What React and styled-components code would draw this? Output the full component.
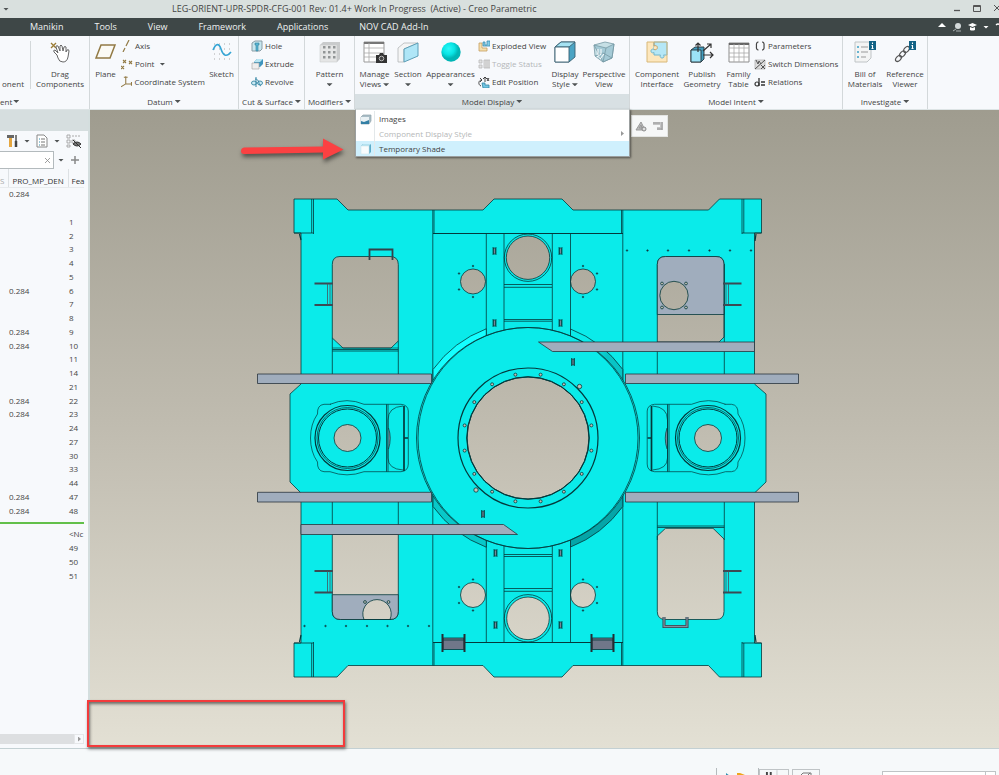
import React from "react";
import styled, { createGlobalStyle, css } from "styled-components";

const GlobalStyle = createGlobalStyle`
  * {
    box-sizing: border-box;
  }
  body {
    margin: 0;
    font: 8px/10px "Open Sans", "Noto Sans", sans-serif;
    color: #444;
  }
  button {
    font: inherit;
    color: inherit;
    background: none;
    border: none;
    padding: 0;
    margin: 0;
  }
`;

const CYAN = "#0aebea";
const PLATE = "#a0adbd";
const BLUE = "#2f8fb0";

/* ---------- icons ---------- */

const Icon = ({ w = 22, h = 22, children }) => (
  <svg width={w} height={h} viewBox={`0 0 ${w} ${h}`} fill="none" aria-hidden="true">
    {children}
  </svg>
);

const HandIcon = () => (
  <Icon>
    <path d="M2 2l5 5M7 2l-5 5" stroke="#9a7b35" strokeWidth="1.3" />
    <path
      d="M8 14L5 11q-1-2 1-2l3 3-2-6q0-2 2-1l2 5V5q1-2 2 0l1 5 1-4q1-1 2 0v5l1-2q2-1 2 1l-1 6q-1 5-5 5-4 0-5-4z"
      stroke="#666"
      strokeWidth="1"
      fill="#fff"
    />
  </Icon>
);

const PlaneIcon = () => (
  <Icon>
    <path d="M6 4h14l-5 13H1z" stroke="#927a45" strokeWidth="1.5" fill="#fbfaf5" />
  </Icon>
);

const AxisIcon = () => (
  <Icon w={12} h={12}>
    <path d="M8 0L5 6M4 8l-2 4" stroke="#927a45" strokeWidth="1.2" />
  </Icon>
);

const PointIcon = () => (
  <Icon w={12} h={12}>
    <path
      d="M2 2l3 3m0-3L2 5M8 3l3 3m0-3L8 6M0 8l3 3m0-3l-3 3"
      stroke="#927a45"
      strokeWidth="1.1"
    />
  </Icon>
);

const CsysIcon = () => (
  <Icon w={12} h={12}>
    <path d="M5 0v8h7M5 8l-5 3M3 1h4M11 6v4" stroke="#927a45" strokeWidth="1.1" />
  </Icon>
);

const SketchIcon = () => (
  <Icon>
    {[3, 8, 13, 18].map((y) => (
      <path key={y} d={`M3 ${y}h18`} stroke="#aaa" strokeDasharray="1 4" />
    ))}
    <path d="M2 9C5 2 8 2 10 8s5 9 10 3" stroke="#35a5d5" strokeWidth="1.6" />
  </Icon>
);

const HoleIcon = () => (
  <Icon w={12} h={12}>
    <path d="M1 3l3-2h7v8l-2 2H1z" fill="#c7e7ef" stroke="#8b9da5" />
    <path d="M4 3h4v2H7v6H5V5H4z" fill="#55b4d4" stroke="#367f99" strokeWidth=".6" />
  </Icon>
);

const ExtrudeIcon = () => (
  <Icon w={12} h={12}>
    <path d="M3 4l3-3h6v5l-3 3H3z" fill="#3e95bd" />
    <path d="M3 4l3-3h6L9 4z" fill="#b9e6f3" />
    <path d="M1 5h7v6H1z" fill="#eee" stroke="#aaa" strokeWidth=".7" />
  </Icon>
);

const RevolveIcon = () => (
  <Icon w={12} h={12}>
    <ellipse cx="3" cy="7" rx="2.5" ry="2" stroke="#4590aa" fill="#cceaf4" />
    <ellipse cx="9" cy="7" rx="2.5" ry="2" stroke="#4590aa" fill="#cceaf4" />
    <path d="M5 1v10M4 3c5 0 3 6 6 7" stroke="#3687a5" />
  </Icon>
);

const PatternIcon = () => (
  <Icon>
    <path d="M1 4l3-3h17v17l-3 3H1z" fill="#c9cbcc" />
    <path d="M1 4h17v17H1z" fill="#e5e6e6" stroke="#cbcccd" strokeWidth=".6" />
    {[6, 11, 16].map((y) =>
      [4, 9, 14].map((x) => <rect key={`${x}-${y}`} x={x} y={y - 1} width="2.5" height="2.5" fill="#929596" />)
    )}
  </Icon>
);

const ManageIcon = () => (
  <Icon w={24}>
    <path d="M1 1h20v20H1z" fill="#fff" stroke="#999" />
    <path d="M1 2h20" stroke="#777" strokeWidth="2" />
    <path d="M1 7h20M1 12h20M1 16h20M6 2v19" stroke="#aaa" strokeWidth=".8" />
    <path d="M13 14h3l1-2h3l1 2h3v8H13z" fill="#333" />
    <circle cx="18.500" cy="17.500" r="2.300" stroke="#bbb" fill="#444" />
  </Icon>
);

const SectionIcon = () => (
  <Icon>
    <path d="M1 7l6-5h14L7 8v13H1z" fill="#f5f5f5" stroke="#b3b6b8" strokeWidth=".8" />
    <path d="M7 8l14-6v13L7 21z" fill="#afe6f7" stroke="#5d9eb6" />
  </Icon>
);

const SphereIcon = () => (
  <Icon>
    <defs>
      <radialGradient id="sphere" cx=".38" cy=".33">
        <stop offset="0" stopColor="#2cf8f8" />
        <stop offset=".6" stopColor="#08e5e5" />
        <stop offset="1" stopColor="#00b5b5" />
      </radialGradient>
    </defs>
    <circle cx="11" cy="11" r="9.700" fill="url(#sphere)" />
  </Icon>
);

const ExplodedIcon = () => (
  <Icon w={12} h={12}>
    <path d="M1 3h3v5h5v3H1z" fill="#f5dfae" stroke="#c5a05f" strokeWidth=".8" />
    <path d="M5 2h2v3h2V1h3v5H5z" fill="#85cee8" stroke="#3a8eae" strokeWidth=".8" />
  </Icon>
);

const ToggleIcon = () => (
  <Icon w={12} h={12}>
    <path d="M1 2h3v3H1zM1 7h3v3H1zM6 2h6v8H6zM8 2v8M10 2v8" stroke="#b9b9b9" strokeWidth=".8" fill="#e3e3e3" />
  </Icon>
);

const EditPosIcon = () => (
  <Icon w={12} h={12}>
    <path d="M4 7h3v2h4v3H5z" fill="#72c5e2" stroke="#3387a5" strokeWidth=".8" />
    <path d="M3 10C0 9 0 4 4 4M2 2l2 2-2 2M7 1v5M5 3l2-2 2 2M9 2l2 3m0-3L9 5" stroke="#333" strokeWidth=".9" />
  </Icon>
);

const CubeIcon = () => (
  <Icon>
    <path d="M1 6l6-5h14v15l-6 5H1z" fill="#4ba4c4" stroke="#3a6172" strokeWidth=".9" />
    <path d="M1 6l6-5h14l-6 5z" fill="#a5e2f2" stroke="#3a6172" strokeWidth=".9" />
    <path d="M1 6h14v15H1z" fill="#fff" stroke="#3a6172" strokeWidth=".9" />
  </Icon>
);

const PerspectiveIcon = () => (
  <Icon>
    <path d="M1 4l11-3 9 2-2 14-9 4-8-6z" fill="#c6dfe5" stroke="#7699a5" strokeWidth=".8" />
    <path d="M1 4l12 3 8-4-2 14-9 4zM13 7l-3 14M2 15l8-3 9 5" stroke="#7699a5" strokeWidth=".8" fill="#8fbccb" fillOpacity=".6" />
    <path d="M5 8v6M8 8v5M4 16l4-3M7 18l4-5" stroke="#fff" />
  </Icon>
);

const PuzzleIcon = () => (
  <Icon>
    <path d="M1 1h20v20H1z" fill="#fde7bd" />
    <path
      d="M8 1H21V14H17.500C20 18 12.500 18 14.500 14H8V11.500C4 13.500 4 6.500 8 8.500Z"
      fill="#b5e7f6"
      stroke="#72b6ce"
    />
    <path d="M8 1V5C12.500 3 12.500 10 8 8.500" fill="#fde7bd" stroke="#c3a268" />
    <path d="M1 1h20v20H1z" stroke="#d8b878" />
  </Icon>
);

const PublishIcon = () => (
  <Icon w={24}>
    <path d="M1 9l4-3h9v12l-3 3H1z" fill="#439dbe" stroke="#26343b" strokeWidth=".9" />
    <path d="M1 9h10v12H1z" fill="#9be2f6" stroke="#26343b" strokeWidth=".9" />
    <path d="M8 11V2M5.500 4.500L8 2l2.500 2.500M13 10l8-7M17 3h4v4M13 14h10M20 11l3 3-3 3" stroke="#333" strokeWidth="1.200" />
  </Icon>
);

const TableIcon = () => (
  <Icon>
    <path d="M1 2h20v19H1z" fill="#fff" stroke="#8d8d8d" />
    <path d="M1 3h20" stroke="#666" strokeWidth="2" />
    <path d="M1 7h20M1 12h20M1 16h20M6 3v18M11 3v18M16 3v18" stroke="#aaa" strokeWidth=".8" />
  </Icon>
);

const ParensIcon = () => (
  <Icon w={12} h={12}>
    <path d="M4.500 2Q2 2 2.500 6Q2 10 4.500 10M8 2Q10.500 2 10 6Q10.500 10 8 10" stroke="#444" strokeWidth="1.200" />
  </Icon>
);

const SwitchIcon = () => (
  <Icon w={12} h={12}>
    <path d="M1 2h10v9H1z" fill="#ddd" stroke="#aaa" strokeWidth=".7" />
    <path d="M2 2l2 4 1-3 2 3M1 11L11 2M7 7l4 4M7 11l4-4" stroke="#444" strokeWidth=".9" />
  </Icon>
);

const RelationsIcon = () => (
  <Icon w={12} h={12}>
    <circle cx="3" cy="8" r="2" stroke="#333" strokeWidth="1.200" />
    <path d="M5 2v8M7 6h4M7 9h4" stroke="#333" strokeWidth="1.300" />
  </Icon>
);

const InfoTag = ({ x }) => (
  <g>
    <path d={`M${x} 0h7v9h-7z`} fill="#116184" />
    <path d={`M${x + 3.5} 1.500v1.500m0 1v4M${x + 2.5} 4.500h1m-1 3h2`} stroke="#fff" strokeWidth="1.100" />
  </g>
);

const BillIcon = () => (
  <Icon w={22}>
    <path d="M1 1h16v16l-4 4H1z" fill="#f3f4f4" stroke="#bfc4c6" />
    <path d="M3 6h2M3 11h2M3 16h2" stroke="#3b9ec5" strokeWidth="1.500" />
    <path d="M7 6h7M7 11h7M7 16h5" stroke="#999" />
    <InfoTag x={15} />
  </Icon>
);

const ChainIcon = () => (
  <Icon w={22}>
    <g stroke="#555" strokeWidth="1.200">
      <ellipse cx="4.500" cy="17.500" rx="3.500" ry="2.200" transform="rotate(-45 4.500 17.500)" />
      <ellipse cx="8.500" cy="13" rx="3.500" ry="2.200" transform="rotate(-45 8.500 13)" />
      <ellipse cx="12.500" cy="8.500" rx="3.500" ry="2.200" transform="rotate(-45 12.500 8.500)" />
    </g>
    <InfoTag x={15} />
  </Icon>
);

const ImagesIcon = () => (
  <Icon w={12} h={12}>
    <path d="M1 4l2-2h8v6l-2 3H1z" fill="#a9bdc6" stroke="#91a4ad" strokeWidth=".7" />
    <path d="M1 4h8v7H1z" fill="#e9f1f4" />
    <path d="M1 8l3 1 5-2v4H1z" fill="#347fa5" />
  </Icon>
);

const ShadeIcon = () => (
  <Icon w={12} h={12}>
    <path d="M1 3l2-2h8v8l-2 2H1z" fill="#5dacc9" />
    <path d="M1 3l2-2h8L9 3z" fill="#b4e2f0" />
    <path d="M1 3h8v8H1z" fill="#f8fcfd" stroke="#cfe5ed" strokeWidth=".6" />
  </Icon>
);

/* ---------- title and menu bars ---------- */

const Window = styled.div`
  height: 100vh;
  display: flex;
  flex-direction: column;
  overflow: hidden;
  background: #f7fafb;
`;

const TitleBar = styled.header`
  flex: none;
  height: 18px;
  display: flex;
  align-items: center;
  padding-left: 3px;
  background: #d9e0de;
  font-size: 9px;
`;

const Title = styled.div`
  margin-left: 163px;
  white-space: pre;
`;

const WindowButtons = styled.div`
  margin-left: auto;
  display: flex;
  gap: 12px;
  margin-right: -2px;
`;

const MenuBar = styled.nav`
  flex: none;
  height: 18px;
  display: flex;
  align-items: center;
  gap: 31px;
  padding-left: 30px;
  background: #3e4747;
  color: #eef1f1;
  font-size: 9px;
`;

const MenuTools = styled.div`
  margin-left: auto;
  display: flex;
  align-items: center;
  gap: 6px;
`;

const Caret = styled.span`
  display: inline-block;
  flex: none;
  width: 6px;
  height: 3px;
  margin-left: ${(p) => p.$gap || 0}px;
  vertical-align: middle;
  background: ${(p) => p.$color || "#4f5354"};
  clip-path: polygon(0 0, 100% 0, 50% 100%);
`;

/* ---------- ribbon ---------- */

const Ribbon = styled.section`
  flex: none;
  position: relative;
  z-index: 2;
  display: flex;
  height: 74px;
  background: #f7f9fc;
  border-bottom: 1px solid #dde4e5;
`;

const Group = styled.div`
  position: relative;
  flex: none;
  width: ${(p) => p.$width}px;
  display: flex;
  flex-direction: column;
  border-right: 1px solid #d3d8da;
`;

const GroupBody = styled.div`
  flex: 1;
  display: flex;
  padding: 1px 0 0 ${(p) => p.$pad || 0}px;
`;

const GroupLabel = styled.button`
  height: 15px;
  display: flex;
  align-items: center;
  justify-content: ${(p) => (p.$start ? "flex-start" : "center")};
  white-space: nowrap;
  ${(p) =>
    p.$open &&
    css`
      background: #d8e0e3;
    `}
`;

const BigButton = styled.button`
  width: ${(p) => p.$width}px;
  height: 56px;
  flex: none;
  display: flex;
  flex-direction: column;
  align-items: center;
  padding-top: 4px;
  white-space: nowrap;
  svg {
    flex: none;
    margin-bottom: 6px;
  }
`;

const SmallColumn = styled.div`
  display: flex;
  flex-direction: column;
  width: ${(p) => p.$width}px;
  padding-left: ${(p) => p.$pad || 0}px;
`;

const SmallButton = styled.button`
  height: 18px;
  display: flex;
  align-items: center;
  gap: 2px;
  white-space: nowrap;
  color: ${(p) => (p.disabled ? "#b4b7b9" : "inherit")};
`;

const CutOffButton = styled.button`
  width: 24px;
  height: 52px;
  display: flex;
  align-items: flex-end;
  justify-content: flex-end;
`;

const Divider = styled.i`
  width: 1px;
  height: 48px;
  margin: 4px 0 0 6px;
  background: #d3d8da;
`;

const Big = ({ icon, width, lines, caret }) => (
  <BigButton $width={width}>
    {icon}
    <span>{lines[0]}</span>
    <span>
      {lines[1]}
      {caret && <Caret $gap={lines[1] ? 2 : 0} />}
    </span>
  </BigButton>
);

const Small = ({ icon, children, ...rest }) => (
  <SmallButton {...rest}>
    {icon}
    {children}
  </SmallButton>
);

const DropMenu = styled.div`
  position: absolute;
  top: 100%;
  left: 0;
  right: -1px;
  padding-top: 1px;
  background: #fff;
  border: 1px solid #9b9f9f;
  border-top-color: #d8dedf;
  box-shadow: 1px 1px 2px rgba(0, 0, 0, 0.5);
`;

const DropItem = styled.button`
  width: 100%;
  height: 15px;
  display: flex;
  align-items: center;
  text-align: left;
  background: ${(p) => (p.$active ? "#cff0fd" : "#fff")};
  color: ${(p) => (p.disabled ? "#b5b7b8" : "inherit")};
  span:last-of-type {
    flex: 1;
  }
`;

const DropIcon = styled.i`
  width: 19px;
  height: 15px;
  margin-right: 4px;
  padding: 2px 0 0 4px;
  border-right: 1px solid #e3e8ea;
`;

const RightArrow = styled.i`
  display: block;
  width: 3px;
  height: 5px;
  margin-right: 5px;
  background: #999;
  clip-path: polygon(0 0, 100% 50%, 0 100%);
`;

/* ---------- model tree ---------- */

const Workspace = styled.main`
  flex: 1;
  min-height: 0;
  display: flex;
  position: relative;
`;

const TreePanel = styled.aside`
  flex: none;
  width: 90px;
  display: flex;
  flex-direction: column;
  background: #f7f9fc;
  border-right: 2px solid #d4dede;
  padding-right: 4px;
`;

const TreeHeader = styled.div`
  height: 21px;
  margin-right: -4px;
  background: #d6dedf;
`;

const TreeToolbar = styled.div`
  height: 20px;
  display: flex;
  align-items: center;
  gap: 6px;
  padding-left: 6px;
`;

const SearchRow = styled.div`
  height: 18px;
  display: flex;
  align-items: center;
`;

const SearchBox = styled.label`
  width: 54px;
  height: 18px;
  display: flex;
  align-items: center;
  background: #fff;
  border: 1px solid #b3babd;
  border-left: none;
  input {
    width: 44px;
    border: none;
    outline: none;
    background: none;
    font: inherit;
    padding: 0;
  }
`;

const TreeTable = styled.table`
  flex: none;
  width: 84px;
  table-layout: fixed;
  border-collapse: collapse;
  ${(p) =>
    p.$height &&
    css`
      height: ${p.$height}px;
    `}
  th {
    height: 18px;
    padding: 6px 0 0 4px;
    font-weight: 400;
    text-align: left;
    border-bottom: 1px solid #e8ebee;
    border-right: 1px solid #dde1e4;
    white-space: nowrap;
    color: #333;
  }
  th:first-child {
    padding-left: 0;
    color: #aaa;
  }
  th:last-child {
    padding-left: 3px;
    border-right: none;
  }
  td {
    height: 13px;
    padding: 0 0 0 1px;
    white-space: nowrap;
  }
`;

const InsertLine = styled.div`
  flex: none;
  height: 2px;
  margin: 4px 0;
  background: #62c04a;
`;

const ScrollBar = styled.div`
  height: 10px;
  margin: auto 0 4px;
  display: flex;
  background: #dddfe1;
  button {
    width: 10px;
    margin-left: auto;
    padding-left: 3px;
    background: #f7f9fc;
    border: 1px solid #e5e7e9;
  }
`;

const rows = [
  ["0.284", ""], ["", ""], ["", "1"], ["", "2"], ["", "3"], ["", "4"], ["", "5"],
  ["0.284", "6"], ["", "7"], ["", "8"], ["0.284", "9"], ["0.284", "10"], ["", "11"],
  ["", "14"], ["", "21"], ["0.284", "22"], ["0.284", "23"], ["", "24"], ["", "27"],
  ["", "30"], ["", "33"], ["", "44"], ["0.284", "47"], ["0.284", "48"],
];

const laterRows = ["<Nc", "49", "50", "51"];

const TreeCols = () => (
  <colgroup>
    <col style={{ width: 8 }} />
    <col style={{ width: 60 }} />
    <col />
  </colgroup>
);

/* ---------- graphics area ---------- */

const Canvas = styled.section`
  flex: 1;
  position: relative;
  padding: 86px 0 0 166px;
  overflow: hidden;
  background: linear-gradient(#9f9c8f, #c0bcb0 50%, #e3e0d4);
`;

const MiniToolbar = styled.div`
  position: absolute;
  top: 5px;
  left: 541px;
  width: 37px;
  height: 22px;
  display: flex;
  align-items: center;
  justify-content: space-around;
  background: #f6f7f7;
  border: 1px solid #e3e4e2;
`;

const PointerArrow = styled.svg`
  position: absolute;
  top: 22px;
  left: 238px;
  filter: drop-shadow(1px 3px 2px rgba(0, 0, 0, 0.5));
`;

const Callout = styled.div`
  position: absolute;
  left: 87px;
  bottom: 1px;
  width: 258px;
  height: 47px;
  border: 2px solid #f33b3c;
  box-shadow: 1px 2px 3px rgba(0, 0, 0, 0.5), inset 1px 2px 3px rgba(0, 0, 0, 0.5);
`;

const Slot = ({ x, y }) => (
  <g>
    <rect x={x - 1} y={y - 3} width="2" height="6" fill="#789" strokeWidth=".7" />
    <path d={`M${x - 1.500} ${y - 4}v8M${x + 1.500} ${y - 4}v8`} strokeWidth=".7" />
  </g>
);

const Dots = ({ points, r = 0.8 }) =>
  points.map(([x, y]) => <circle key={`${x},${y}`} cx={x} cy={y} r={r} fill="#234" strokeWidth=".5" />);

const circlePath = (x, y, r) => `M${x - r} ${y}a${r} ${r} 0 1 0 ${2 * r} 0a${r} ${r} 0 1 0 ${-2 * r} 0Z`;

const bodyPath = [
  "M294 199H337L348 210H483L494 199H562L573 210H708.500L719.500 199H761.500V233H754.500V384L766 394V482L754.500 493V643H761.500V677H719.500L708.500 665.500H573L562 677H494L483 665.500H348L337 677H294V643H301V493L290 482V394L301 384V233H294Z",
  "M340 256.500H390Q398.300 256.500 398.300 264.500V341L391 348H343L332.300 338V264.500Q332.300 256.500 340 256.500Z",
  "M665.500 256.500H716Q724 256.500 724 264.500V337L719 342H657.300V264.500Q657.300 256.500 665.500 256.500Z",
  "M332.300 534.500H398.300V611.500Q398.300 619.500 390 619.500H340.500Q332.300 619.500 332.300 611.500Z",
  "M665.500 528.300H713L724 539V611.500Q724 619.500 716 619.500H665.500Q657.300 619.500 657.300 611.500V536Z",
  circlePath(528, 257.7, 21.7),
  circlePath(528, 618.3, 21.3),
  circlePath(473, 281.5, 12.5),
  circlePath(583, 281.5, 12.5),
  circlePath(473, 595, 12.5),
  circlePath(583, 595, 12.5),
  circlePath(528, 438, 61),
  circlePath(347.5, 438, 13.5),
  circlePath(708, 438, 13.5),
].join("");

const Pivot = ({ flip }) => (
  <g transform={flip ? "translate(1055.500 0) scale(-1 1)" : undefined}>
    <path
      fill="none"
      strokeWidth=".7"
      d="M331 404.300H324Q317 405 317.500 414Q310.500 424 310.500 438T317.500 462Q317 471 324 471.700H330Q347 478 364 471.700H401Q408.300 471 408.300 464V411Q408 405 401 404.300H364Q347 397 330 404.300"
    />
    <circle cx="347.500" cy="438" r="32.500" fill="none" strokeWidth="1.200" />
    <circle cx="347.500" cy="438" r="30.500" fill="none" strokeWidth=".7" />
    <circle cx="347.500" cy="438" r="29" fill="none" strokeWidth="1" />
    <path d="M386.500 404.300V471.700M388 404.300V471.700" fill="none" />
    <path d="M403 406Q388 407 388 420V458Q388 469 403 470" fill="none" strokeWidth=".7" />
    <path d="M388.500 428Q392 438 388.500 449" fill="#789" strokeWidth=".7" />
    <path d="M404 406V471M404 438H408" strokeWidth="1.700" />
  </g>
);

const Handle = ({ y, flip }) => (
  <g transform={flip ? "translate(1056 0) scale(-1 1)" : undefined}>
    <path d={`M314.500 ${y}H333M314.500 ${y + 21.500}H333`} stroke="#3b4a54" strokeWidth="2" />
    <path d={`M327.500 ${y}v21M330 ${y}v21`} stroke="#46535c" />
  </g>
);

const Bracket = ({ x }) => (
  <g>
    <rect x={x + 1} y="638" width="21" height="11.500" fill="#707789" />
    <path d={`M${x + 1} 640h21`} />
    <path d={`M${x + 0.500} 634v18M${x + 22.500} 634v18`} stroke="#252c33" strokeWidth="2" />
  </g>
);

const bolts = Array.from({ length: 16 }, (_, i) => {
  const a = ((i + 0.5) * Math.PI) / 8;
  return [528 + 64.6 * Math.cos(a), 438 + 64.6 * Math.sin(a)];
});

const Drawing = () => (
  <svg width="544" height="484" viewBox="256 196 544 484" stroke="#04383b" strokeWidth=".8" role="img" aria-label="Leg orient upper spider">
    <path d={bodyPath} fill={CYAN} fillRule="evenodd" />

    {/* plates seen behind the upper right and lower left windows */}
    <path
      d={`M665.500 256.500H716Q724 256.500 724 264.500V314.500H657.300V264.500Q657.300 256.500 665.500 256.500Z${circlePath(674, 295.5, 14.2)}`}
      fill={PLATE}
      fillRule="evenodd"
    />
    <path
      d="M332.300 594.700H398.300V611.500Q398.300 619.500 390 619.500A14.200 14.200 0 1 0 364 619.500H340.500Q332.300 619.500 332.300 611.500Z"
      fill={PLATE}
    />
    <path d="M363.500 619.500H391" />

    {/* frame seams */}
    <g fill="none">
      <path d="M432.800 210V665.500M434 210V233M434 642V665.500M622.800 210V665.500M621.500 210V233M621.500 642V665.500" />
      <path d="M433 233.500H623M433 642.500H623" strokeWidth="1.200" />
      <path d="M294 233H313.500M311.700 199V233M313.500 199V234M294 643H313.500M311.700 643V677M313.500 642V677" />
      <path d="M742 199V234M743.800 199V233M742 233H761.500M742 642V677M743.800 643V677M742 643H761.500" />
      <path d="M299.500 234L301 240M756 234L755 241M299.500 642L301 635M756 642L755 635" strokeWidth="1.200" />
      <path d="M332.300 338V374M398.300 341V374M332.300 349.500H398.300M332.300 351H398.300" />
      <path d="M332.300 348H398.300" strokeWidth=".6" />
      <path d="M657.300 342V374M724.300 264V374M332.300 502V535M398.300 502V535" />
      <path d="M657.300 502V540M724.300 502V540M657.300 526H724.300M657.300 527.500H724.300" />
      <path d="M486.300 233V336M504 233V331M552.300 233V331M570.500 233V336" />
      <path d="M486.300 541V642M504 546V642M552.300 546V642M570.500 541V642" />
      <path d="M504 284.500H552M504 287.300H552M504 319.500H552M504 321.200H552" />
      <path d="M504 554.500H552M504 556.500H552M504 588.500H552M504 591.300H552" />
      <circle cx="528" cy="257.700" r="23.700" />
      <circle cx="528" cy="618.300" r="23.700" />
    </g>

    {/* hub ring */}
    <defs>
      <linearGradient id="rimRight" x2="1" y2="1">
        <stop offset=".4" stopColor={CYAN} />
        <stop offset=".6" stopColor="#08c4c6" />
      </linearGradient>
    </defs>
    <path d="M433 369.500A117 117 0 0 1 486.300 328.800V336L433 382Z" fill="#14ffff" />
    <path d="M570.500 329A117 117 0 0 1 622.800 369.500V382L570.500 336Z" fill="url(#rimRight)" />
    <path d="M433 506.500A117 117 0 0 0 486.300 547.200V540L433 494Z" fill="#08c8c9" />
    <path d="M570.500 547A117 117 0 0 0 622.800 506.500V494L570.500 540Z" fill="#05a5a8" />
    <path d={`M416.500 438a111.500 110.500 0 1 0 223 0a111.500 110.500 0 1 0 -223 0Z${circlePath(528, 438, 61)}`} fill={CYAN} fillRule="evenodd" />
    <ellipse cx="528" cy="438" rx="110" ry="110.500" fill="none" />
    <circle cx="528" cy="438" r="70" fill="none" strokeWidth="1.200" />
    <circle cx="528" cy="438" r="61.300" fill="none" strokeWidth="1" />
    {bolts.map(([x, y]) => (
      <circle key={x + y} cx={x} cy={y} r="1.500" fill="#c3bfb3" />
    ))}
    <circle cx="579.500" cy="386.500" r="2.200" fill="#c3bfb3" />
    <circle cx="476" cy="490" r="2.200" fill="#c8c5b9" />

    <Pivot />
    <Pivot flip />

    {/* flat plates */}
    <g fill={PLATE} stroke="#28343c">
      <path d="M257.500 374H431.500V383.500H257.500ZM625.500 374H798.500V383.500H625.500ZM257.500 492.300H431.500V502H257.500ZM625.500 492.300H798.500V502H625.500Z" />
      <path d="M538.500 342H754.500V351.500H552.500Z" />
      <path d="M301 524.500H503.500L517.500 534.500H301Z" />
    </g>

    <Handle y={283.5} />
    <Handle y={283.5} flip />
    <Handle y={571} />
    <Handle y={571} flip />
    <path d="M369.500 260V249.500H392.500V260" fill="none" stroke="#33414a" strokeWidth="1.800" />
    <path d="M664 617V626.500H687V617" fill="none" stroke="#33414a" strokeWidth="3" />
    <path d="M664 617V626.500H687V617" fill="none" stroke="#8191a0" strokeWidth="1.300" />
    <Bracket x={442} />
    <Bracket x={591} />

    {[[494.5, 251], [494.5, 323], [560.5, 251], [560.5, 323], [573, 362], [483, 514], [495.5, 553], [495.5, 625], [560.5, 553], [560.5, 625]].map(
      ([x, y]) => (
        <Slot key={`${x}-${y}`} x={x} y={y} />
      )
    )}
    <Dots points={[627, 647.5, 668, 689, 709.5, 730, 751].map((x) => [x, 250.5])} />
    <Dots points={[304.5, 325.5, 346, 367, 387.5, 408, 429].map((x) => [x, 626])} />
    {[281.5, 595].map((y) => (
      <Dots
        key={y}
        points={[[473, y - 15.5], [473, y + 15.5], [459, y - 8], [459, y + 8], [583, y - 15.5], [583, y + 15.5], [597, y - 8], [597, y + 8]]}
      />
    ))}
    {[[662, 283.5], [686, 283.5], [662, 307.5], [686, 307.5], [365, 602], [388.5, 602]].map(([x, y]) => (
      <circle key={`${x}-${y}`} cx={x} cy={y} r="1.400" fill="#c3bfb3" />
    ))}
  </svg>
);

/* ---------- status bar ---------- */

const StatusBar = styled.footer`
  flex: none;
  height: 27px;
  display: flex;
  padding-top: 19px;
  overflow: hidden;
  background: #f6f9fa;
  border-top: 1px solid #c3d0d3;
`;

const StatusTools = styled.div`
  width: 283px;
  flex: none;
  margin-left: auto;
  display: flex;
  border-left: 1px solid #b5bbbd;
`;

const StatusButton = styled.button`
  width: ${(p) => p.$width}px;
  height: 18px;
  flex: none;
  display: flex;
  align-items: flex-start;
  margin: 1px 3px 0 0;
  padding-left: 5px;
  border: 1px solid #bfc4c6;
`;

const FilterSelect = styled.select`
  width: 114px;
  height: 20px;
  margin: 3px 3px 0 auto;
  appearance: none;
  border: 1px solid #bfc4c6;
  background: #fff linear-gradient(#bfc4c6, #bfc4c6) no-repeat 102px 0 / 1px 100%;
`;

const App = () => {
  return (
    <Window>
      <GlobalStyle />
      <TitleBar>
        <Caret />
        <Title>LEG-ORIENT-UPR-SPDR-CFG-001 Rev: 01.4+ Work In Progress  (Active) - Creo Parametric</Title>
        <WindowButtons>
          <button aria-label="Minimize">
            <Icon w={8} h={8}><path d="M1 6.500h6" stroke="#555" strokeWidth="1.300" /></Icon>
          </button>
          <button aria-label="Maximize">
            <Icon w={8} h={8}><path d="M.5 1.500h7v6h-7zM.5 2.500h7" stroke="#555" /></Icon>
          </button>
          <button aria-label="Close">
            <Icon w={8} h={8}><path d="M1 1l6 6M7 1L1 7" stroke="#555" /></Icon>
          </button>
        </WindowButtons>
      </TitleBar>

      <MenuBar>
        <button>Manikin</button>
        <button>Tools</button>
        <button>View</button>
        <button>Framework</button>
        <button>Applications</button>
        <button>NOV CAD Add-In</button>
        <MenuTools>
          <Icon w={8} h={10}><path d="M0 5l4-4 4 4z" fill="#fff" /></Icon>
          <Icon w={10} h={10}>
            <circle cx="6" cy="4" r="3" fill="#d3d9da" />
            <path d="M4 7L1 9M4 9h5" stroke="#aab1b2" />
          </Icon>
          <Icon w={9} h={10}>
            <path d="M0 3l4.500-2L9 3 4.500 5zM2 5v3q2 1 5 0V5L4.500 6z" fill="#fff" />
          </Icon>
          <Caret $color="#fff" />
          <Icon w={4} h={10}><path d="M1 3q2-2 4 0" stroke="#fff" strokeWidth="1.300" /></Icon>
        </MenuTools>
      </MenuBar>

      <Ribbon>
        <Group $width={90}>
          <GroupBody>
            <CutOffButton>onent</CutOffButton>
            <Divider />
            <Big icon={<HandIcon />} width={58} lines={["Drag", "Components"]} />
          </GroupBody>
          <GroupLabel $start>ent<Caret $gap={1} /></GroupLabel>
        </Group>

        <Group $width={149}>
          <GroupBody>
            <Big icon={<PlaneIcon />} width={31} lines={["Plane"]} />
            <SmallColumn $width={84}>
              <Small icon={<AxisIcon />}>Axis</Small>
              <Small icon={<PointIcon />}>Point<Caret $gap={3} /></Small>
              <Small icon={<CsysIcon />}>Coordinate System</Small>
            </SmallColumn>
            <Big icon={<SketchIcon />} width={33} lines={["Sketch"]} />
          </GroupBody>
          <GroupLabel>Datum<Caret $gap={2} /></GroupLabel>
        </Group>

        <Group $width={66}>
          <GroupBody $pad={12}>
            <SmallColumn $width={50}>
              <Small icon={<HoleIcon />}>Hole</Small>
              <Small icon={<ExtrudeIcon />}>Extrude</Small>
              <Small icon={<RevolveIcon />}>Revolve</Small>
            </SmallColumn>
          </GroupBody>
          <GroupLabel>Cut &amp; Surface<Caret $gap={2} /></GroupLabel>
        </Group>

        <Group $width={50}>
          <GroupBody>
            <Big icon={<PatternIcon />} width={49} lines={["Pattern"]} caret />
          </GroupBody>
          <GroupLabel>Modifiers<Caret $gap={2} /></GroupLabel>
        </Group>

        <Group $width={275}>
          <GroupBody $pad={4}>
            <Big icon={<ManageIcon />} width={31} lines={["Manage", "Views"]} caret />
            <Big icon={<SectionIcon />} width={36} lines={["Section"]} caret />
            <Big icon={<SphereIcon />} width={49} lines={["Appearances"]} caret />
            <SmallColumn $width={74} $pad={3}>
              <Small icon={<ExplodedIcon />}>Exploded View</Small>
              <Small icon={<ToggleIcon />} disabled>Toggle Status</Small>
              <Small icon={<EditPosIcon />}>Edit Position</Small>
            </SmallColumn>
            <Big icon={<CubeIcon />} width={32} lines={["Display", "Style"]} caret />
            <Big icon={<PerspectiveIcon />} width={46} lines={["Perspective", "View"]} />
          </GroupBody>
          <GroupLabel $open>Model Display<Caret $gap={2} /></GroupLabel>
          <DropMenu role="menu">
            <DropItem role="menuitem">
              <DropIcon><ImagesIcon /></DropIcon>
              <span>Images</span>
            </DropItem>
            <DropItem role="menuitem" disabled>
              <DropIcon />
              <span>Component Display Style</span>
              <RightArrow />
            </DropItem>
            <DropItem role="menuitem" $active>
              <DropIcon><ShadeIcon /></DropIcon>
              <span>Temporary Shade</span>
            </DropItem>
          </DropMenu>
        </Group>

        <Group $width={213}>
          <GroupBody $pad={3}>
            <Big icon={<PuzzleIcon />} width={48} lines={["Component", "Interface"]} />
            <Big icon={<PublishIcon />} width={42} lines={["Publish", "Geometry"]} />
            <Big icon={<TableIcon />} width={31} lines={["Family", "Table"]} />
            <SmallColumn $width={86}>
              <Small icon={<ParensIcon />}>Parameters</Small>
              <Small icon={<SwitchIcon />}>Switch Dimensions</Small>
              <Small icon={<RelationsIcon />}>Relations</Small>
            </SmallColumn>
          </GroupBody>
          <GroupLabel>Model Intent<Caret $gap={2} /></GroupLabel>
        </Group>

        <Group $width={85}>
          <GroupBody $pad={2}>
            <Big icon={<BillIcon />} width={40} lines={["Bill of", "Materials"]} />
            <Big icon={<ChainIcon />} width={40} lines={["Reference", "Viewer"]} />
          </GroupBody>
          <GroupLabel>Investigate<Caret $gap={2} /></GroupLabel>
        </Group>
      </Ribbon>

      <Workspace>
        <TreePanel>
          <TreeHeader />
          <TreeToolbar>
            <Icon w={12} h={14}>
              <path d="M1 1h7v3H1z" fill="#666" />
              <path d="M3 4h3v9H3z" fill="#e5a640" />
              <path d="M10 1v6" stroke="#555" strokeWidth="1.500" />
              <path d="M10 7v6" stroke="#444" strokeWidth="2.500" />
            </Icon>
            <Caret />
            <Icon w={12} h={14}>
              <path d="M1 1h7l3 3v9H1z" fill="#fff" stroke="#888" />
              <path d="M5 5h4M5 8h4M5 11h4" stroke="#777" />
              <path d="M3 5h1M3 8h1M3 11h1" stroke={BLUE} />
            </Icon>
            <Caret />
            <Icon w={16} h={14}>
              <path d="M1 1h3v3H1zM1 6h3v3H1zM1 11h3v2H1zM6 6h3v3H6z" stroke="#999" strokeWidth=".8" />
              <path d="M6 2h8" stroke="#aaa" strokeDasharray="2 1" />
              <path d="M7 10q4-4 8 0-4 4-8 0zM7 6l8 8" stroke="#333" fill="#777" />
            </Icon>
          </TreeToolbar>
          <SearchRow>
            <SearchBox>
              <input aria-label="Search" />
              <Icon w={7} h={7}><path d="M1 1l5 5M6 1L1 6" stroke="#888" strokeWidth=".8" /></Icon>
            </SearchBox>
            <Caret $gap={4} />
            <Icon w={20} h={10}><path d="M11 1v8M7 5h8" stroke="#888" strokeWidth="1.500" /></Icon>
          </SearchRow>
          <TreeTable>
            <TreeCols />
            <thead>
              <tr>
                <th>S</th>
                <th>PRO_MP_DEN</th>
                <th>Fea</th>
              </tr>
            </thead>
          </TreeTable>
          <TreeTable $height={330}>
            <TreeCols />
            <tbody>
              {rows.map(([density, feature], i) => (
                <tr key={i}>
                  <td />
                  <td>{density}</td>
                  <td>{feature}</td>
                </tr>
              ))}
            </tbody>
          </TreeTable>
          <InsertLine />
          <TreeTable $height={55}>
            <TreeCols />
            <tbody>
              {laterRows.map((feature) => (
                <tr key={feature}>
                  <td />
                  <td />
                  <td>{feature}</td>
                </tr>
              ))}
            </tbody>
          </TreeTable>
          <ScrollBar>
            <button aria-label="Scroll right"><RightArrow /></button>
          </ScrollBar>
        </TreePanel>

        <Canvas>
          <Drawing />
          <MiniToolbar>
            <Icon w={12} h={12}>
              <path d="M1 10l5-8 4 8zM4 8l2-3 1 3z" stroke="#999" fill="#bbb" />
              <circle cx="9" cy="9" r="2" stroke="#888" fill="#ddd" />
            </Icon>
            <Icon w={12} h={12}>
              <path d="M1 2h10v8H5V7h3V5H1z" fill="#c5c5c5" />
              <path d="M1 3h7M10 2v8M5 9h5" stroke="#999" />
            </Icon>
          </MiniToolbar>
        </Canvas>

        <PointerArrow width="112" height="34" viewBox="238 132 112 34">
          <path d="M244 147.500L323 146.500V138.500L343.500 149.500L323 159.500V152.500L244 154Q241 154 241 151T244 147.500Z" fill="#fb4142" />
        </PointerArrow>
        <Callout />
      </Workspace>

      <StatusBar>
        <StatusTools>
          <Icon w={42} h={8}>
            <path d="M9 5l4 3H9z" fill={BLUE} />
            <path d="M20 5h3l5 2v1h-8z" fill="#efa51b" />
            <path d="M41.500 0v8" stroke="#b5bbbd" />
          </Icon>
          <StatusButton $width={30} aria-label="Pause">
            <Icon w={24} h={8}>
              <path d="M2 2v6M6 2v6" stroke="#444" strokeWidth="2" />
              <path d="M12.500 0v8" stroke="#c5cacc" />
            </Icon>
          </StatusButton>
          <StatusButton $width={28} aria-label="Geometry">
            <Icon w={16} h={8}><path d="M2 6l3-3h8v4M2 6h7l3-3" stroke="#777" /></Icon>
          </StatusButton>
          <FilterSelect aria-label="Selection filter" />
        </StatusTools>
      </StatusBar>
    </Window>
  );
};

export default App;
